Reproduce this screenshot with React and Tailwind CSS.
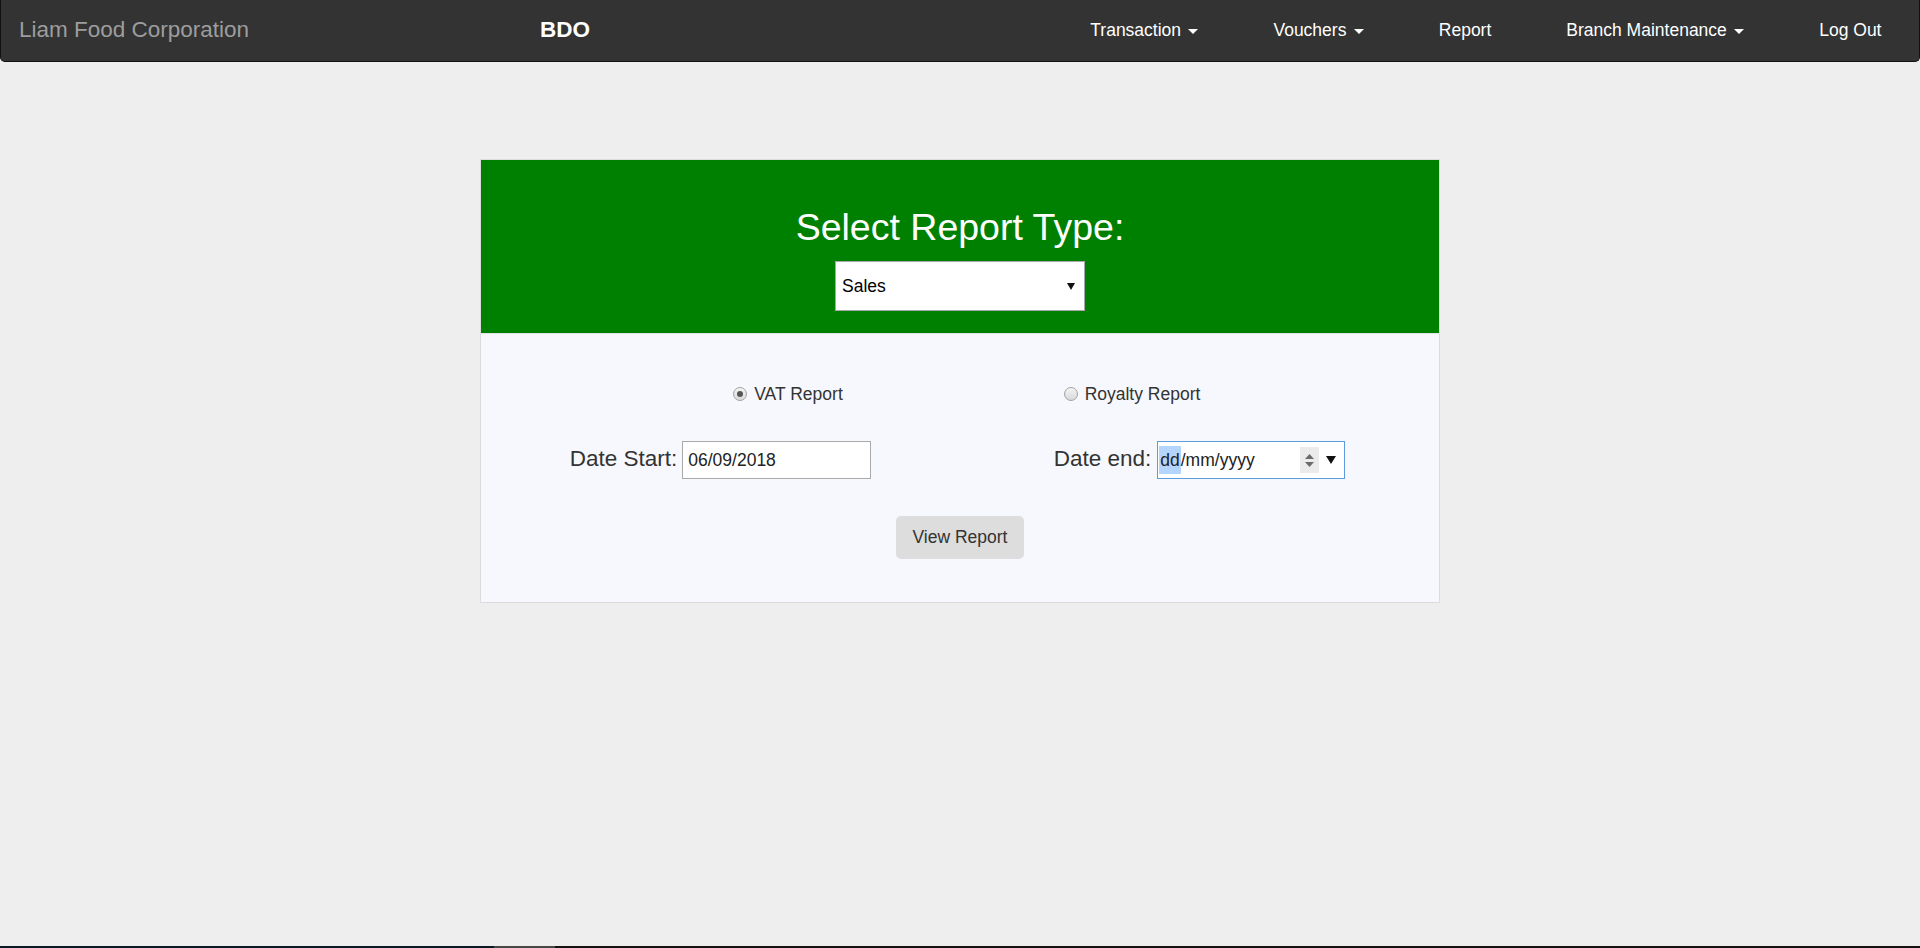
import React from "react";

const Caret = () => (
  <span className="inline-block ml-[2.5px] align-middle w-0 h-0 border-l-[5px] border-r-[5px] border-t-[5px] border-l-transparent border-r-transparent border-t-white" />
);

const Radio = ({ checked }) => (
  <span className="w-[14px] h-[14px] shrink-0 rounded-full border border-[#a3a3a3] bg-linear-to-b from-[#f4f4f4] to-[#d9d9d9] flex items-center justify-center">
    {checked && <span className="w-[6px] h-[6px] rounded-full bg-[#555]" />}
  </span>
);

const NavLink = ({ children, caret }) => (
  <li className="px-[37.5px] text-white whitespace-nowrap">
    {children}
    {caret && (
      <>
        {" "}
        <Caret />
      </>
    )}
  </li>
);

export default function App() {
  return (
    <div className="h-[948px] flex flex-col bg-[#eee] font-['Liberation_Sans',Arial,sans-serif] text-[#333] overflow-hidden">
      <nav className="h-[62px] shrink-0 bg-[#333] border-x border-b border-[#111] rounded-b-[5px] flex items-center">
        <div className="w-[539px] pl-[18px] mb-[2px] text-[22.5px] leading-[25px] text-[#9d9d9d] whitespace-nowrap">
          Liam Food Corporation
        </div>
        <div className="mb-[2px] text-[22.5px] leading-[25px] font-bold text-white">BDO</div>
        <ul className="ml-auto flex items-center text-[17.5px] leading-[25px]">
          <NavLink caret>Transaction</NavLink>
          <NavLink caret>Vouchers</NavLink>
          <NavLink>Report</NavLink>
          <NavLink caret>Branch Maintenance</NavLink>
          <NavLink>Log Out</NavLink>
        </ul>
      </nav>

      <main className="flex-1">
        <div className="mx-auto mt-[97px] w-[960px] border border-[#dcdcdc]">
          <div className="bg-[#008000] pt-[47px] pb-[22px] border-b border-[#e2e2e2] flex flex-col items-center">
            <h2 className="text-[37.5px] leading-[41px] text-white font-normal mb-[13px]">
              Select Report Type:
            </h2>
            <div className="w-[250px] h-[50px] bg-white border border-[#a9a9a9] flex items-center pl-[6px] pr-[9px] text-[17.5px] text-black">
              <span>Sales</span>
              <svg className="ml-auto" width="8" height="8" viewBox="0 0 8 8">
                <path d="M0 1 L8 1 L4 8 Z" fill="#111" />
              </svg>
            </div>
          </div>

          <div className="bg-[#f7f8fd] pt-[47px] pb-[43px]">
            <div className="mx-auto w-[688px] h-[26px] grid grid-cols-2 text-[17.5px] leading-[25px]">
              <div className="flex items-center justify-center gap-[7px]">
                <Radio checked />
                <span>VAT Report</span>
              </div>
              <div className="flex items-center justify-center gap-[7px]">
                <Radio />
                <span>Royalty Report</span>
              </div>
            </div>

            <div className="mt-[34px] h-[38px] grid grid-cols-2">
              <div className="flex items-center justify-center gap-[5px]">
                <span className="text-[22.5px] leading-[25px] mb-[4px]">Date Start:</span>
                <div className="w-[189px] h-[38px] bg-white border border-[#a9a9a9] pl-[5px] flex items-center text-[17.5px] text-[#222]">
                  06/09/2018
                </div>
              </div>
              <div className="flex items-center justify-center gap-[6px]">
                <span className="text-[22.5px] leading-[25px] mb-[4px]">Date end:</span>
                <div className="w-[188px] h-[38px] bg-white border border-[#5b9be0] pl-[1px] pr-[8px] flex items-center text-[17.5px] text-[#222]">
                  <span className="h-[28px] px-[1px] bg-[#b4d5fe] flex items-center">dd</span>
                  <span>/mm/yyyy</span>
                  <span className="ml-auto w-[19px] h-[26px] bg-[#ebebeb] flex flex-col items-center justify-center gap-[3px]">
                    <svg width="9" height="5" viewBox="0 0 9 5">
                      <path d="M0 5 L9 5 L4.5 0 Z" fill="#6b6b6b" />
                    </svg>
                    <svg width="9" height="5" viewBox="0 0 9 5">
                      <path d="M0 0 L9 0 L4.5 5 Z" fill="#6b6b6b" />
                    </svg>
                  </span>
                  <svg className="ml-[7px]" width="10" height="8" viewBox="0 0 10 8">
                    <path d="M0 0 L10 0 L5 8 Z" fill="#111" />
                  </svg>
                </div>
              </div>
            </div>

            <div className="mt-[37px] flex justify-center">
              <button className="w-[128px] h-[43px] bg-[#ddd] rounded-[5px] text-[17.5px] text-[#333] flex items-center justify-center">
                View Report
              </button>
            </div>
          </div>
        </div>
      </main>

      <div className="h-[2px] shrink-0 flex">
        <div className="w-[494px] bg-[#0b1826]" />
        <div className="w-[61px] bg-[#4b4646]" />
        <div className="flex-1 bg-[#17120f]" />
      </div>
    </div>
  );
}
